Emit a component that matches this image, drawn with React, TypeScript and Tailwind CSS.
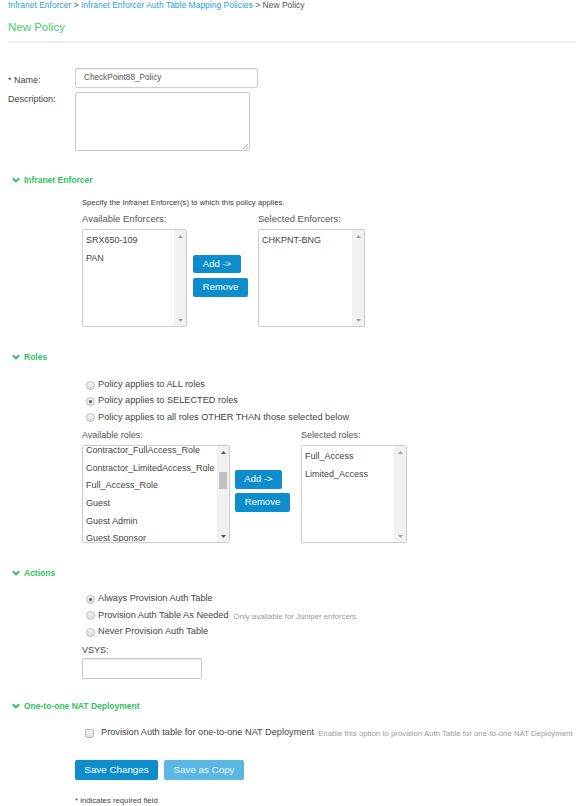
import React from "react";

const Chevron = () => (
  <svg width="8" height="6" viewBox="0 0 8 6" className="mr-[4px]">
    <path d="M0.8 1.2 L4 4.4 L7.2 1.2" fill="none" stroke="#2fc25f" strokeWidth="2" />
  </svg>
);

const SectionHeader = ({ title, mt }: { title: string; mt: string }) => (
  <div className={`flex items-center h-[12px] pl-[4px] ${mt}`}>
    <Chevron />
    <span className="text-[8.5px] font-bold text-[#2fc25f] leading-[12px]">{title}</span>
  </div>
);

const Radio = ({ checked }: { checked?: boolean }) => (
  <span className="w-[9px] h-[9px] rounded-full border border-[#bdbdbd] bg-gradient-to-b from-[#f4f4f4] to-[#dedede] flex items-center justify-center mr-[3px] shrink-0">
    {checked && <span className="w-[3px] h-[3px] rounded-full bg-[#555]" />}
  </span>
);

const ScrollBar = ({ thumb, active }: { thumb?: boolean; active?: boolean }) => (
  <div className="w-[12px] bg-[#f1f1f1] flex flex-col items-center shrink-0 relative">
    <div className="h-[12px] flex items-center justify-center">
      <svg width="5" height="3" viewBox="0 0 5 3">
        <path d="M0 3 L2.5 0 L5 3 Z" fill={active ? "#505050" : "#a3a3a3"} />
      </svg>
    </div>
    <div className="flex-1 w-full relative">
      {thumb && <div className="absolute left-[2px] right-[2px] top-[14px] h-[17px] bg-[#c1c1c1]" />}
    </div>
    <div className="h-[12px] flex items-center justify-center">
      <svg width="5" height="3" viewBox="0 0 5 3">
        <path d="M0 0 L2.5 3 L5 0 Z" fill={active ? "#505050" : "#a3a3a3"} />
      </svg>
    </div>
  </div>
);

const ListBox = ({
  items,
  w,
  offset,
  thumb,
  active,
}: {
  items: string[];
  w: string;
  offset?: string;
  thumb?: boolean;
  active?: boolean;
}) => (
  <div className={`${w} h-[98px] border border-[#cdcdcd] rounded-[2px] flex overflow-hidden bg-white`}>
    <div className="flex-1 overflow-hidden">
      <div className={`pt-[2px] pl-[3px] ${offset ?? ""}`}>
        {items.map((it) => (
          <div key={it} className="h-[17.7px] leading-[17.7px] text-[9px] text-[#444] whitespace-nowrap">
            {it}
          </div>
        ))}
      </div>
    </div>
    <ScrollBar thumb={thumb} active={active} />
  </div>
);

const BlueBtn = ({ children, w }: { children: React.ReactNode; w: string }) => (
  <div className={`${w} bg-[#0e8dcc] rounded-[2px] text-white text-[9.5px] flex items-center justify-center`}>
    {children}
  </div>
);

export default function App() {
  return (
    <div className="w-[576px] h-[806px] overflow-hidden bg-white font-['Liberation_Sans',Arial,sans-serif] text-[#444]">
      <div className="pl-[8px]">
        <div className="h-[11px] leading-[11px] text-[8.5px] whitespace-nowrap">
          <span className="text-[#2a9fd8]">Infranet Enforcer</span>
          <span className="text-[#555]"> &gt; </span>
          <span className="text-[#2a9fd8]">Infranet Enforcer Auth Table Mapping Policies</span>
          <span className="text-[#555]"> &gt; New Policy</span>
        </div>
        <div className="mt-[9px] h-[14px] leading-[14px] text-[11.5px] text-[#3fcf66]">New Policy</div>
        <div className="mt-[7px] h-[2px] bg-[#ececec]" />

        {/* Name */}
        <div className="mt-[25px] flex items-start">
          <div className="w-[67px] text-[9px] leading-[10px] pt-[7px]">* Name:</div>
          <div className="w-[183px] h-[20px] border border-[#cccccc] rounded-[2px] text-[8.2px] text-[#555] flex items-center pl-[8px] shadow-[inset_0_1px_1px_rgba(0,0,0,0.08)]">
            CheckPoint88_Policy
          </div>
        </div>
        <div className="mt-[4px] flex items-start">
          <div className="w-[67px] text-[9px] leading-[10px] pt-[2px]">Description:</div>
          <div className="w-[175px] h-[59px] border border-[#c8c8c8] rounded-[2px] relative">
            <svg width="6" height="6" viewBox="0 0 6 6" className="absolute right-[1px] bottom-[1px]">
              <path d="M6 1 L1 6 M6 4 L4 6" stroke="#999" strokeWidth="0.8" />
            </svg>
          </div>
        </div>

        <SectionHeader title="Infranet Enforcer" mt="mt-[23px]" />
        <div className="pl-[74px]">
          <div className="mt-[12px] h-[10px] leading-[10px] text-[7.5px] tracking-[0.1px] text-[#333] whitespace-nowrap">
            Specify the Infranet Enforcer(s) to which this policy applies.
          </div>
          <div className="mt-[5px] flex h-[12px] leading-[12px] text-[9.5px] text-[#555]">
            <div className="w-[176px]">Available Enforcers:</div>
            <div>Selected Enforcers:</div>
          </div>
          <div className="mt-[4px] flex">
            <ListBox items={["SRX650-109", "PAN"]} w="w-[105px]" />
            <div className="ml-[6px] w-[65px] pt-[26px] flex flex-col gap-[5px]">
              <BlueBtn w="w-[48px] h-[18px]">Add -&gt;</BlueBtn>
              <BlueBtn w="w-[55px] h-[19px]">Remove</BlueBtn>
            </div>
            <ListBox items={["CHKPNT-BNG"]} w="w-[107px]" />
          </div>
        </div>

        <SectionHeader title="Roles" mt="mt-[24px]" />
        <div className="pl-[74px]">
          <div className="mt-[14px] pl-[4px] text-[9.2px] text-[#444]">
            <div className="h-[16px] flex items-center"><Radio />Policy applies to ALL roles</div>
            <div className="h-[16.5px] flex items-center"><Radio checked />Policy applies to SELECTED roles</div>
            <div className="h-[16.5px] flex items-center"><Radio />Policy applies to all roles OTHER THAN those selected below</div>
          </div>
          <div className="mt-[3px] flex h-[12px] leading-[12px] text-[9px] text-[#555]">
            <div className="w-[219px]">Available roles:</div>
            <div>Selected roles:</div>
          </div>
          <div className="mt-[4px] flex">
            <ListBox
              items={[
                "Contractor_FullAccess_Role",
                "Contractor_LimitedAccess_Role",
                "Full_Access_Role",
                "Guest",
                "Guest Admin",
                "Guest Sponsor",
              ]}
              w="w-[148px]"
              offset="-mt-[6px]"
              thumb
              active
            />
            <div className="ml-[5px] w-[66px] pt-[25px] flex flex-col gap-[4px]">
              <BlueBtn w="w-[47px] h-[19px]">Add -&gt;</BlueBtn>
              <BlueBtn w="w-[55px] h-[19px]">Remove</BlueBtn>
            </div>
            <ListBox items={["Full_Access", "Limited_Access"]} w="w-[106px]" />
          </div>
        </div>

        <SectionHeader title="Actions" mt="mt-[24px]" />
        <div className="pl-[74px]">
          <div className="mt-[12px] pl-[4px] text-[9.2px] text-[#444]">
            <div className="h-[16.5px] flex items-center"><Radio checked />Always Provision Auth Table</div>
            <div className="h-[16.5px] flex items-center">
              <Radio />Provision Auth Table As Needed
              <span className="ml-[5px] text-[7.8px] text-[#999] mt-[2px]">Only available for Juniper enforcers.</span>
            </div>
            <div className="h-[16.5px] flex items-center"><Radio />Never Provision Auth Table</div>
          </div>
          <div className="mt-[4.5px] h-[11px] leading-[11px] text-[9px] text-[#444]">VSYS:</div>
          <div className="mt-[2px] w-[120px] h-[21px] border border-[#c8c8c8] rounded-[2px] shadow-[inset_0_1px_1px_rgba(0,0,0,0.1)]" />
        </div>

        <SectionHeader title="One-to-one NAT Deployment" mt="mt-[21px]" />
        <div className="mt-[14px] h-[14px] flex items-center pl-[77px] whitespace-nowrap">
          <span className="w-[9px] h-[9px] rounded-[2px] border border-[#b5b5b5] bg-gradient-to-b from-[#f5f5f5] to-[#e2e2e2] mr-[7px] shrink-0" />
          <span className="text-[9.2px] text-[#444]">Provision Auth table for one-to-one NAT Deployment</span>
          <span className="ml-[4px] text-[7.8px] text-[#999] mt-[1px]">Enable this option to provision Auth Table for one-to-one NAT Deployment</span>
        </div>

        <div className="mt-[20px] pl-[67px] flex gap-[6px]">
          <div className="w-[83px] h-[20px] bg-[#0e8dcc] rounded-[2px] text-white text-[9.8px] flex items-center justify-center">
            Save Changes
          </div>
          <div className="w-[80px] h-[20px] bg-[#5ab7e2] rounded-[2px] text-[#eaf6fc] text-[9.8px] flex items-center justify-center">
            Save as Copy
          </div>
        </div>
        <div className="mt-[16px] pl-[67px] h-[9px] leading-[9px] text-[7.75px] text-[#444]">* indicates required field</div>
      </div>
    </div>
  );
}
